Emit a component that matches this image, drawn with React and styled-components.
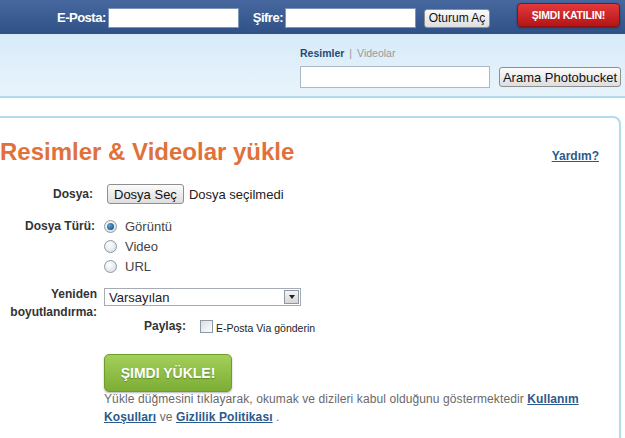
import React from "react";
import styled, { createGlobalStyle } from "styled-components";

const Global = createGlobalStyle`
  html, body { margin: 0; padding: 0; background: #fff; overflow: hidden; }
  body { font-family: "Liberation Sans", Arial, sans-serif; }
  * { box-sizing: border-box; }
`;

const TopBar = styled.div`
  height: 34px;
  background: linear-gradient(#46689f, #2f5187);
  display: flex;
  align-items: center;
  padding-left: 57px;
  white-space: nowrap;
`;

const BarLabel = styled.label`
  color: #fff;
  font-weight: bold;
  font-size: 13px;
  letter-spacing: -0.5px;
  margin-right: 2px;
  margin-left: ${(p) => p.$ml || 0}px;
  flex-shrink: 0;
`;

const BarInput = styled.input`
  width: 131px;
  height: 20px;
  border: 1px solid #7d95bb;
  background: #fff;
  padding: 0 3px;
  margin-top: 2px;
  flex-shrink: 0;
`;

const GrayButton = styled.button`
  font-family: "Liberation Sans", Arial, sans-serif;
  font-size: ${(p) => p.$fs || 13}px;
  color: #111;
  white-space: nowrap;
  flex-shrink: 0;
  height: ${(p) => p.$h || 19}px;
  width: ${(p) => (p.$w ? `${p.$w}px` : "auto")};
  padding: 0 ${(p) => p.$px ?? 6}px;
  border: 1px solid #8f8f8f;
  border-radius: 3px;
  background: linear-gradient(#fbfbfb, #dedede);
  margin-left: ${(p) => p.$ml || 0}px;
  margin-top: ${(p) => p.$mt || 0}px;
  line-height: 1;
  cursor: pointer;
`;

const JoinButton = styled.button`
  margin-left: 27px;
  width: 103px;
  height: 24px;
  margin-top: -4px;
  flex-shrink: 0;
  white-space: nowrap;
  border: 1px solid #8e1012;
  border-radius: 4px;
  background: linear-gradient(#e2393a, #b51517);
  color: #fff;
  font-family: "Liberation Sans", Arial, sans-serif;
  font-weight: bold;
  font-size: 10.5px;
  letter-spacing: -0.2px;
  padding: 0;
  box-shadow: 0 1px 2px rgba(0, 0, 0, 0.35);
  cursor: pointer;
`;

const SearchBand = styled.div`
  height: 64px;
  background: linear-gradient(#d8ebf9, #e8f4fc);
  border-bottom: 2px solid #b3dbee;
  padding: 13px 0 0 300px;
`;

const Tabs = styled.div`
  font-size: 10.5px;
  color: #999;
  display: flex;
  gap: 5px;
  height: 19px;
`;

const Tab = styled.span`
  color: ${(p) => (p.$active ? "#1d4b78" : "#999")};
  font-weight: ${(p) => (p.$active ? "bold" : "normal")};
`;

const SearchRow = styled.div`
  display: flex;
  align-items: center;
`;

const SearchInput = styled.input`
  width: 190px;
  height: 22px;
  border: 1px solid #a9b9c6;
  background: #fff;
  flex-shrink: 0;
`;

const Spacer = styled.div`
  height: 18px;
`;

const Card = styled.div`
  margin-left: -20px;
  width: 641px;
  height: 330px;
  border-top: 2px solid #b3dbee;
  border-right: 2px solid #b3dbee;
  border-top-right-radius: 8px;
  padding: 20px 0 0 20px;
`;

const TitleRow = styled.div`
  display: flex;
  align-items: baseline;
  justify-content: space-between;
  padding-right: 20px;
  height: 46px;
`;

const Title = styled.h1`
  margin: 0;
  font-size: 24px;
  font-weight: bold;
  color: #e0713b;
  line-height: 28px;
`;

const HelpLink = styled.a`
  color: #2b5a8c;
  font-weight: bold;
  font-size: 12px;
  text-decoration: underline;
`;

const Form = styled.div`
  display: grid;
  grid-template-columns: 97px 1fr;
  column-gap: 7px;
  row-gap: 12px;
`;

const Label = styled.div`
  font-size: 12px;
  font-weight: bold;
  color: #333;
  text-align: right;
  line-height: 18px;
  padding-right: ${(p) => p.$pr || 0}px;
  margin-top: ${(p) => p.$mt || 0}px;
`;

const Field = styled.div`
  display: flex;
  flex-direction: ${(p) => (p.$col ? "column" : "row")};
  align-items: ${(p) => (p.$col ? "flex-start" : "center")};
  font-size: 13px;
  color: #222;
`;

const Plain = styled.span`
  font-size: 13px;
  color: #222;
  margin-left: 5px;
`;

const RadioRow = styled.label`
  display: flex;
  align-items: center;
  height: 20px;
  font-size: 13px;
  color: #444;
`;

const Radio = styled.span`
  width: 13px;
  height: 13px;
  border-radius: 50%;
  border: 1px solid #8b9aa6;
  background: radial-gradient(circle at 40% 35%, #ffffff, #d3d8dd);
  margin-right: 8px;
  display: flex;
  align-items: center;
  justify-content: center;
  &::after {
    content: "";
    display: ${(p) => (p.$on ? "block" : "none")};
    width: 7px;
    height: 7px;
    border-radius: 50%;
    background: radial-gradient(circle at 35% 35%, #5fa3e0, #0b3f75);
  }
`;

const Select = styled.div`
  width: 197px;
  height: 18px;
  border: 1px solid #a5acb5;
  background: #fff;
  display: flex;
  align-items: center;
  justify-content: space-between;
  padding-left: 4px;
  font-size: 13px;
  color: #222;
`;

const SelectArrow = styled.span`
  width: 15px;
  height: 14px;
  margin-right: 1px;
  border: 1px solid #8f98a2;
  background: linear-gradient(#f4f4f4, #d6d6d6);
  display: flex;
  align-items: center;
  justify-content: center;
  &::after {
    content: "";
    border-left: 3.5px solid transparent;
    border-right: 3.5px solid transparent;
    border-top: 4px solid #222;
  }
`;

const ShareRow = styled.div`
  display: flex;
  align-items: center;
  padding-left: 144px;
  margin-top: -6px;
  height: 22px;
`;

const ShareLabel = styled.span`
  font-size: 12px;
  font-weight: bold;
  color: #333;
  margin-right: 14px;
`;

const Check = styled.span`
  width: 13px;
  height: 13px;
  border: 1px solid #8b9aa6;
  background: linear-gradient(135deg, #dcdfe3, #fdfdfd);
  margin-right: 3px;
`;

const Small = styled.span`
  font-size: 10.5px;
  color: #222;
  margin-top: 3px;
`;

const UploadWrap = styled.div`
  padding-left: 104px;
  margin-top: 17px;
`;

const UploadButton = styled.button`
  width: 128px;
  height: 38px;
  border: 1px solid #6f9c2b;
  border-radius: 5px;
  background: linear-gradient(#a2d05a, #7cad34);
  color: #fff;
  font-family: "Liberation Sans", Arial, sans-serif;
  font-weight: bold;
  font-size: 14px;
  text-shadow: 0 1px 1px rgba(60, 90, 20, 0.5);
  box-shadow: 0 1px 2px rgba(0, 0, 0, 0.3);
  cursor: pointer;
`;

const Terms = styled.p`
  margin: -2px 0 0;
  width: 480px;
  font-size: 12px;
  letter-spacing: 0.1px;
  line-height: 18px;
  color: #6a6a6a;
`;

const TermsLink = styled.a`
  color: #2b5a8c;
  font-weight: bold;
  text-decoration: underline;
`;

export default function App() {
  return (
    <>
      <Global />
      <TopBar>
        <BarLabel>E-Posta:</BarLabel>
        <BarInput />
        <BarLabel $ml={14}>Şifre:</BarLabel>
        <BarInput />
        <GrayButton $ml={8} $w={66} $px={0} $mt={2} $fs={12}>Oturum Aç</GrayButton>
        <JoinButton>ŞIMDI KATILIN!</JoinButton>
      </TopBar>
      <SearchBand>
        <Tabs>
          <Tab $active>Resimler</Tab>
          <span>|</span>
          <Tab>Videolar</Tab>
        </Tabs>
        <SearchRow>
          <SearchInput />
          <GrayButton $ml={9} $h={20} $w={122} $px={0}>Arama Photobucket</GrayButton>
        </SearchRow>
      </SearchBand>
      <Spacer />
      <Card>
        <TitleRow>
          <Title>Resimler &amp; Videolar yükle</Title>
          <HelpLink href="#">Yardım?</HelpLink>
        </TitleRow>
        <Form>
          <Label $pr={4} $mt={1}>Dosya:</Label>
          <Field>
            <GrayButton $ml={3} $h={20} $px={6}>Dosya Seç</GrayButton>
            <Plain>Dosya seçilmedi</Plain>
          </Field>
          <Label $pr={2} $mt={1}>Dosya Türü:</Label>
          <Field $col>
            <RadioRow><Radio $on />Görüntü</RadioRow>
            <RadioRow><Radio />Video</RadioRow>
            <RadioRow><Radio />URL</RadioRow>
          </Field>
          <Label $mt={-3}>Yeniden<br />boyutlandırma:</Label>
          <Field $col>
            <Select>
              Varsayılan
              <SelectArrow />
            </Select>
          </Field>
        </Form>
        <ShareRow>
          <ShareLabel>Paylaş:</ShareLabel>
          <Check />
          <Small>E-Posta Via gönderin</Small>
        </ShareRow>
        <UploadWrap>
          <UploadButton>ŞIMDI YÜKLE!</UploadButton>
          <Terms>
            Yükle düğmesini tıklayarak, okumak ve dizileri kabul olduğunu göstermektedir{" "}
            <TermsLink href="#">Kullanım Koşulları</TermsLink> ve{" "}
            <TermsLink href="#">Gizlilik Politikası</TermsLink> .
          </Terms>
        </UploadWrap>
      </Card>
    </>
  );
}
